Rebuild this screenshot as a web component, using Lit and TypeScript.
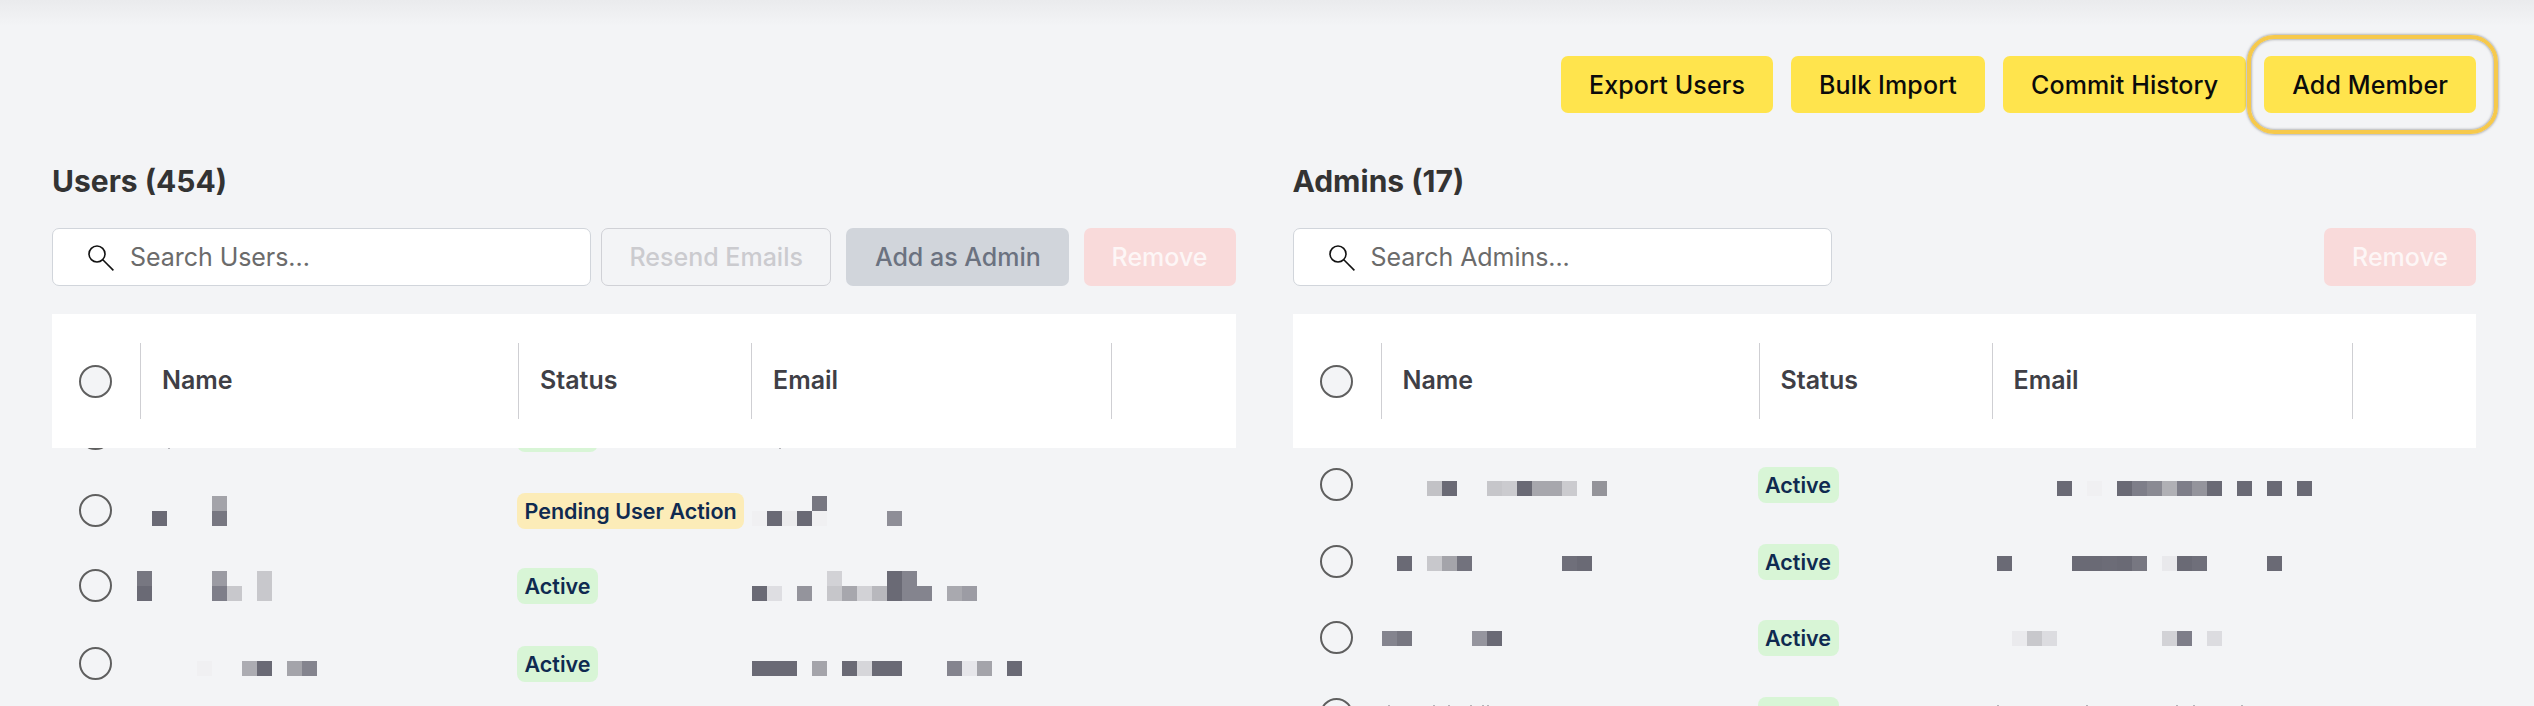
import { LitElement, html, css } from "lit";
import { customElement, property } from "lit/decorators.js";

type Cell = [number, number, string];
interface Row {
  h: number; status: string; nameTop: number; emailTop: number;
  name: Cell[]; email: Cell[]; nameMarks?: number[]; emailMarks?: number[];
}

const D = "#6a6a75";

const usersRows: Row[] = [
  { h: 77, status: "Active", nameTop: 32, emailTop: 32, name: [], email: [], nameMarks: [31], emailMarks: [27] },
  {
    h: 75, status: "Pending User Action", nameTop: 3, emailTop: 3,
    name: [[1, 1, D], [5, 0, "#a3a3a9"], [5, 1, "#777781"]],
    email: [[4, 0, "#777781"], [0, 1, "#f0f0f2"], [1, 1, D], [2, 1, "#ebebed"], [3, 1, D], [4, 1, "#f0f0f2"], [9, 1, "#8e8e97"]],
  },
  {
    h: 78, status: "Active", nameTop: 3, emailTop: 3,
    name: [[0, 0, "#777781"], [0, 1, D], [5, 0, "#9b9ba3"], [5, 1, "#7e7e89"], [6, 1, "#c8c8cc"], [8, 0, "#c8c8cc"], [8, 1, "#c8c8cc"]],
    email: [[5, 0, "#d2d2d6"], [9, 0, D], [10, 0, "#84848e"], [0, 1, D], [1, 1, "#dedee2"], [3, 1, "#94949c"], [5, 1, "#c6c6ca"], [6, 1, "#a7a7ad"], [7, 1, "#d2d2d6"], [8, 1, "#b8b8bd"], [9, 1, D], [10, 1, "#84848e"], [11, 1, "#84848e"], [13, 1, "#a9a9af"], [14, 1, "#9c9ca4"]],
  },
  {
    h: 60, status: "Active", nameTop: 0, emailTop: 0,
    name: [[4, 1, "#f0f0f2"], [7, 1, "#acacb2"], [8, 1, D], [10, 1, "#a4a4aa"], [11, 1, "#84848e"]],
    email: [[0, 1, D], [1, 1, D], [2, 1, D], [4, 1, "#a4a4aa"], [6, 1, D], [7, 1, "#d6d6da"], [8, 1, D], [9, 1, D], [13, 1, "#84848e"], [14, 1, "#e6e6ea"], [15, 1, "#a4a4aa"], [17, 1, D]],
  },
];

const adminRows: Row[] = [
  {
    h: 77, status: "Active", nameTop: -1, emailTop: -1,
    name: [[3, 1, "#c2c2c6"], [4, 1, D], [7, 1, "#c6c6ca"], [8, 1, "#cbcbcf"], [9, 1, D], [10, 1, "#a7a7ad"], [11, 1, "#a7a7ad"], [12, 1, "#cbcbcf"], [14, 1, "#94949a"]],
    email: [[4, 1, D], [6, 1, "#f0f0f2"], [8, 1, D], [9, 1, "#7e7e89"], [10, 1, "#8a8a93"], [11, 1, "#b0b0b5"], [12, 1, "#7e7e89"], [13, 1, "#94949c"], [14, 1, D], [16, 1, D], [18, 1, D], [20, 1, D]],
  },
  {
    h: 76, status: "Active", nameTop: -3, emailTop: -3,
    name: [[1, 1, D], [3, 1, "#c8c8cc"], [4, 1, "#a4a4aa"], [5, 1, "#72727d"], [12, 1, "#6f6f7a"], [13, 1, D]],
    email: [[0, 1, D], [5, 1, D], [6, 1, D], [7, 1, "#6c6c77"], [8, 1, D], [9, 1, "#777781"], [11, 1, "#e9e9ec"], [12, 1, D], [13, 1, "#6f6f7a"], [18, 1, D]],
  },
  {
    h: 77, status: "Active", nameTop: -4, emailTop: -4,
    name: [[0, 1, "#84848e"], [1, 1, "#777781"], [6, 1, "#95959e"], [7, 1, D]],
    email: [[1, 1, "#eaeaed"], [2, 1, "#c8c8cc"], [3, 1, "#dcdce0"], [11, 1, "#d2d2d6"], [12, 1, "#7e7e89"], [14, 1, "#dcdce0"]],
  },
  {
    h: 60, status: "Active", nameTop: 8, emailTop: 8, name: [], email: [],
    nameMarks: [6, 51, 66, 88, 100, 105], emailMarks: [0, 89, 179, 196, 244],
  },
];

@customElement("mosaic-block")
class MosaicBlock extends LitElement {
  @property({ attribute: false }) cells: Cell[] = [];
  @property({ attribute: false }) marks: number[] = [];
  @property({ type: Number }) top = 0;
  static styles = css`
    :host { display: block; }
    .grid { display: grid; grid-template-columns: repeat(22, 15px); grid-template-rows: 15px 15px; }
    .marks { display: flex; height: 1px; }
    .mark { flex: none; width: 2px; height: 1px; background: #b4b4b9; }
  `;
  render() {
    if (this.marks.length) {
      return html`<div class="marks" style="margin-top:${this.top}px">
        ${this.marks.map(
          (x, i) => html`<div class="mark" style="margin-left:${i === 0 ? x : x - this.marks[i - 1] - 2}px"></div>`
        )}
      </div>`;
    }
    return html`<div class="grid" style="margin-top:${this.top}px">
      ${this.cells.map(
        ([c, r, col]) => html`<div style="grid-column:${c + 1};grid-row:${r + 1};background:${col}"></div>`
      )}
    </div>`;
  }
}

@customElement("app-root")
class AppRoot extends LitElement {
  static styles = css`
    :host {
      display: block;
      height: 100vh;
      overflow: hidden;
      box-sizing: border-box;
      padding: 56px 58px 0 52px;
      background: linear-gradient(#eaebed, #f3f4f6 26px);
      font-family: Inter, "Liberation Sans", sans-serif;
    }
    .actions { display: flex; justify-content: flex-end; gap: 18px; }
    .yellow {
      height: 57px; padding: 0 28px; display: flex; align-items: center;
      background: #ffe44d; color: #0b0b0b; border-radius: 7px;
      font-size: 25px; font-weight: 500; letter-spacing: 0.12px; white-space: nowrap;
    }
    .ringwrap { position: relative; display: flex; }
    .ring {
      position: absolute; left: -17px; right: -22px; top: -21px; bottom: -21px;
      border: 4px solid #f6c94c; border-radius: 27px;
      box-shadow: 0 0 3px rgba(0,0,0,.5), inset 0 0 3px rgba(0,0,0,.5);
    }
    .panels { display: grid; grid-template-columns: 1fr 1fr; column-gap: 57px; margin-top: 50px; }
    .panel { min-width: 0; }
    h2 { margin: 0; height: 36px; line-height: 36px; font-size: 30px; font-weight: 700; color: #333; }
    .tools { display: flex; margin-top: 29px; height: 58px; }
    .search {
      width: 539px; box-sizing: border-box; display: flex; align-items: center; gap: 16px;
      padding-left: 35px; background: #fff; border: 1px solid #d1d5db; border-radius: 7px;
      color: #6b6b6b; font-size: 25px; letter-spacing: -0.05px;
    }
    .search svg { flex: none; margin-top: 2px; }
    .btn {
      display: flex; align-items: center; padding: 0 28px; box-sizing: border-box;
      border-radius: 7px; font-size: 25px; font-weight: 500; white-space: nowrap;
    }
    .resend { margin-left: 10px; padding: 0 27.5px; border: 1px solid #d0d1d6; color: #cbcbcf; }
    .admin { margin-left: 15px; padding: 0 28.5px; background: #d1d5db; color: #6b7280; }
    .remove { margin-left: auto; background: #f9dada; color: #fdf6f6; }
    .thead {
      position: relative; z-index: 1; margin-top: 28px; height: 134px; background: #fff;
      display: grid; grid-template-columns: 88px 378px 233px 360px 1fr; align-items: center;
    }
    .th {
      height: 76px; box-sizing: border-box; border-left: 1px solid #cfcfd3; padding: 0 0 2px 21px;
      display: flex; align-items: center; font-size: 25px; font-weight: 600; color: #3f3f46;
    }
    .radio {
      width: 33px; height: 33px; box-sizing: border-box; border: 2px solid #5f5f5f;
      border-radius: 50%; background: #f3f4f6; margin-left: 27px;
    }
    .body.users { margin-top: -32px; --cols: 85px 380px 235px 1fr; }
    .body.admins { margin-top: 19px; --cols: 89px 376px 239px 1fr; }
    .row { display: grid; grid-template-columns: var(--cols); align-items: start; }
    .row .radio { margin-top: 1px; }
    .badge {
      display: inline-flex; align-items: center; height: 36px; padding: 0 7.5px;
      border-radius: 8px; font-size: 21.5px; font-weight: 600; color: #0f2a50; white-space: nowrap;
    }
    .active { background: #d8f5d6; }
    .pending { background: #fcecb8; }
  `;

  private search(label: string) {
    return html`<div class="search">
      <svg width="26" height="26" viewBox="0 0 26 26" fill="none" stroke="#111" stroke-width="1.6">
        <circle cx="9" cy="9" r="8"></circle>
        <line x1="14.8" y1="14.8" x2="25.4" y2="25.4"></line>
      </svg>
      <span>${label}</span>
    </div>`;
  }

  private thead() {
    return html`<div class="thead">
      <div class="radio"></div>
      <div class="th">Name</div>
      <div class="th">Status</div>
      <div class="th">Email</div>
      <div class="th"></div>
    </div>`;
  }

  private body(rows: Row[], cls: string) {
    return html`<div class="body ${cls}">
      ${rows.map(
        (r) => html`<div class="row" style="height:${r.h}px">
          <div class="radio"></div>
          <mosaic-block .cells=${r.name} .marks=${r.nameMarks ?? []} .top=${r.nameTop}></mosaic-block>
          <div><span class="badge ${r.status === "Active" ? "active" : "pending"}">${r.status}</span></div>
          <mosaic-block .cells=${r.email} .marks=${r.emailMarks ?? []} .top=${r.emailTop}></mosaic-block>
        </div>`
      )}
    </div>`;
  }

  render() {
    return html`
      <div class="actions">
        <div class="yellow">Export Users</div>
        <div class="yellow">Bulk Import</div>
        <div class="yellow">Commit History</div>
        <div class="ringwrap"><div class="yellow">Add Member</div><div class="ring"></div></div>
      </div>
      <div class="panels">
        <section class="panel">
          <h2>Users (454)</h2>
          <div class="tools">
            ${this.search("Search Users...")}
            <div class="btn resend">Resend Emails</div>
            <div class="btn admin">Add as Admin</div>
            <div class="btn remove">Remove</div>
          </div>
          ${this.thead()}
          ${this.body(usersRows, "users")}
        </section>
        <section class="panel">
          <h2>Admins (17)</h2>
          <div class="tools">
            ${this.search("Search Admins...")}
            <div class="btn remove">Remove</div>
          </div>
          ${this.thead()}
          ${this.body(adminRows, "admins")}
        </section>
      </div>
    `;
  }
}
